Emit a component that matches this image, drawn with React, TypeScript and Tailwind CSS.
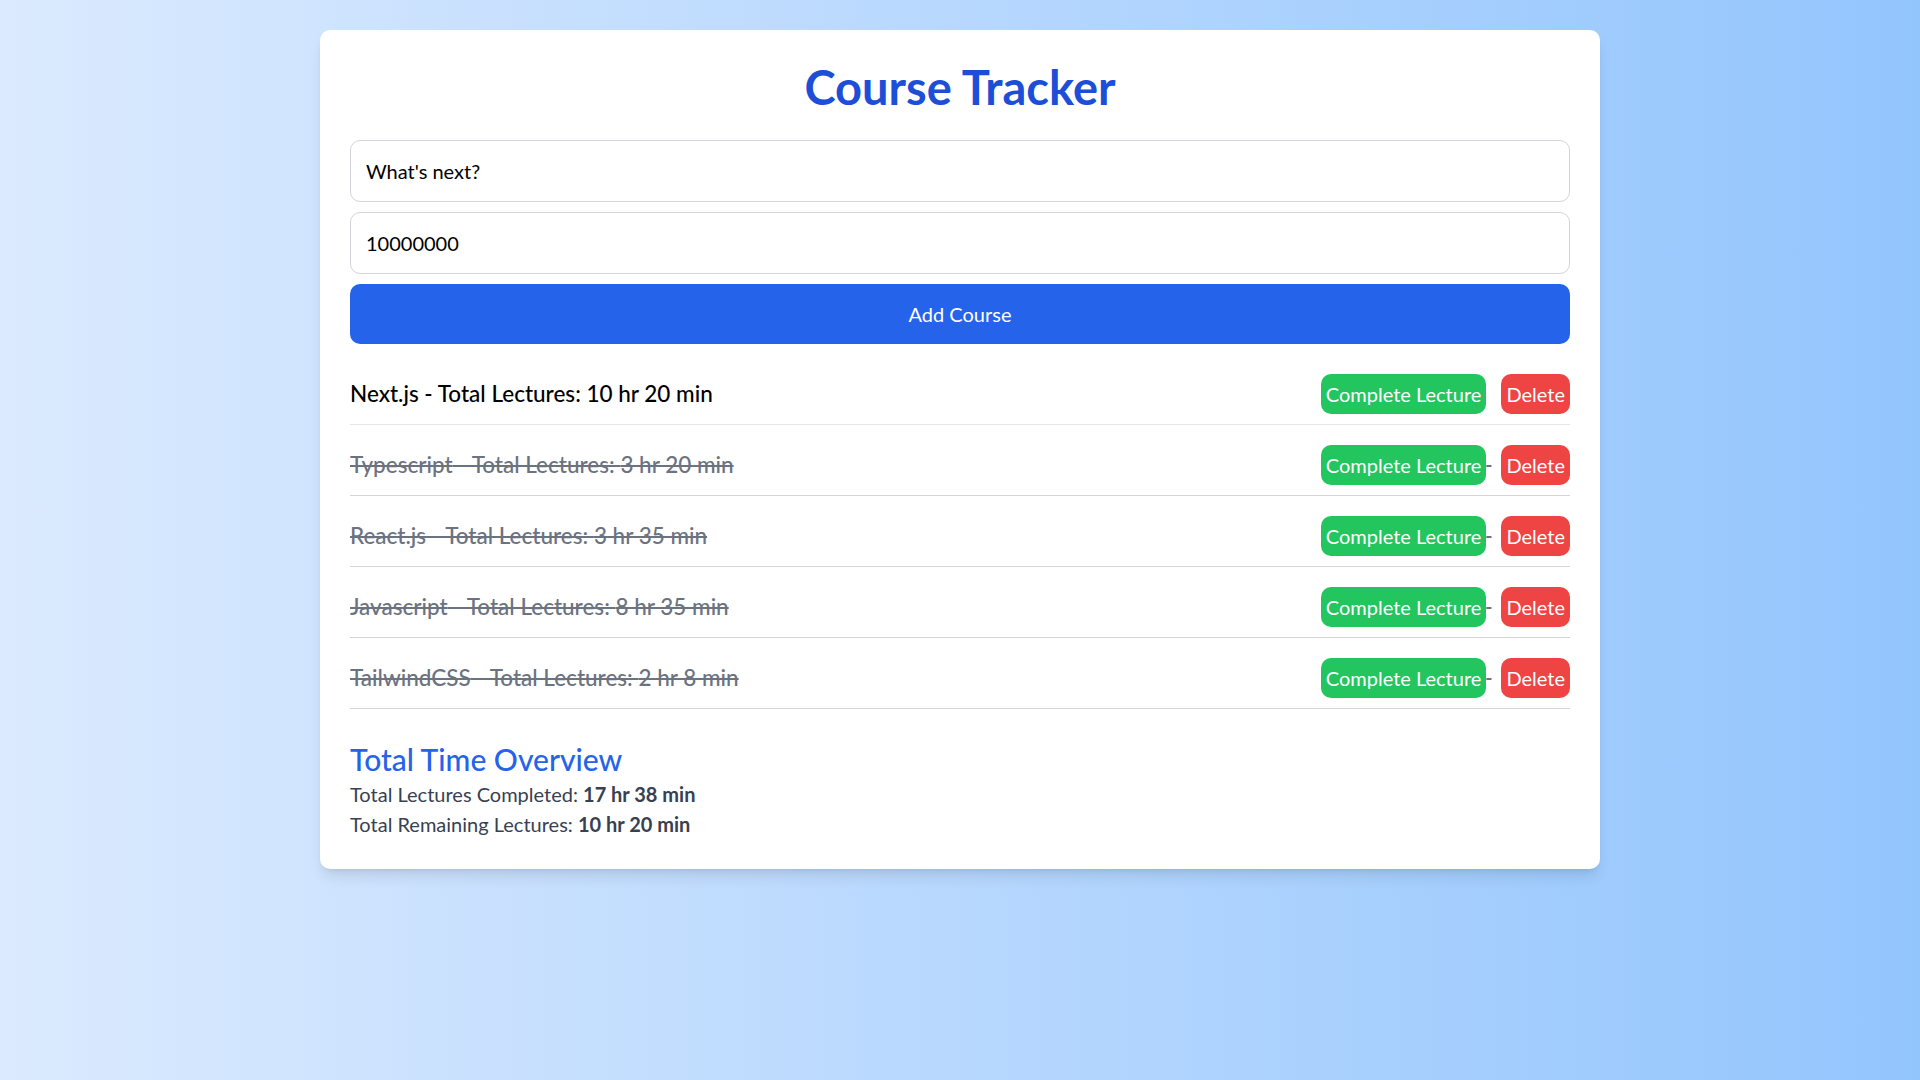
import React, { useState } from 'react';

interface Course {
  name: string;
  minutes: number;
  done: boolean;
}

const initialCourses: Course[] = [
  { name: 'Next.js', minutes: 620, done: false },
  { name: 'Typescript', minutes: 200, done: true },
  { name: 'React.js', minutes: 215, done: true },
  { name: 'Javascript', minutes: 515, done: true },
  { name: 'TailwindCSS', minutes: 128, done: true },
];

const fmt = (m: number) => `${Math.floor(m / 60)} hr ${m % 60} min`;

export default function App() {
  const [courses, setCourses] = useState<Course[]>(initialCourses);
  const [title, setTitle] = useState("What's next?");
  const [duration, setDuration] = useState('10000000');

  const completed = courses.filter((c) => c.done).reduce((s, c) => s + c.minutes, 0);
  const remaining = courses.filter((c) => !c.done).reduce((s, c) => s + c.minutes, 0);

  const toggle = (i: number) =>
    setCourses((list) => list.map((c, idx) => (idx === i ? { ...c, done: !c.done } : c)));
  const remove = (i: number) => setCourses((list) => list.filter((_, idx) => idx !== i));

  return (
    <div className="min-h-screen bg-gradient-to-r from-[#dbeafe] to-[#93c5fd] pt-[30px] font-['Lato','Open_Sans',sans-serif]">
      <div className="max-w-[1280px] mx-auto bg-white rounded-[10px] shadow-lg p-[30px]">
        <h1 className="text-[47px] leading-[50px] font-bold text-center text-[#1d4ed8] pt-[2px] mb-[28px]">
          Course Tracker
        </h1>

        <input
          className="w-full border border-[#d1d5db] rounded-[10px] p-[15px] text-[20px] leading-[30px] text-black mb-[10px] outline-none"
          value={title}
          onChange={(e) => setTitle(e.target.value)}
        />
        <input
          className="w-full border border-[#d1d5db] rounded-[10px] p-[15px] text-[20px] leading-[30px] text-black mb-[10px] outline-none"
          value={duration}
          onChange={(e) => setDuration(e.target.value)}
        />
        <button className="w-full bg-[#2563eb] text-white rounded-[10px] py-[15px] text-[20px] leading-[30px]">
          Add Course
        </button>

        <ul className="mt-[20px]">
          {courses.map((c, i) => (
            <li
              key={c.name}
              className={
                c.done
                  ? 'flex justify-between items-center py-[10px] mb-[10px] border-b border-[#d1d5db] line-through text-[#6b7280]'
                  : 'flex justify-between items-center py-[10px] mb-[10px] border-b border-[#e5e7eb] text-black'
              }
            >
              <span className="text-[22.5px] font-medium">
                {c.name} - Total Lectures: {fmt(c.minutes)}
              </span>
              <div className="text-[20px] leading-[30px]">
                <button
                  onClick={() => toggle(i)}
                  className="bg-[#22c55e] text-white px-[5px] py-[5px] rounded-[10px] text-[20px] leading-[30px]"
                >
                  Complete Lecture
                </button>{' '}
                <button
                  onClick={() => remove(i)}
                  className="ml-[10px] bg-[#ef4444] text-white px-[5px] py-[5px] rounded-[10px] text-[20px] leading-[30px]"
                >
                  Delete
                </button>
              </div>
            </li>
          ))}
        </ul>

        <div className="mt-[30px]">
          <h2 className="text-[30px] leading-[40px] font-medium text-[#2563eb]">Total Time Overview</h2>
          <p className="text-[20px] leading-[30px] text-[#374151]">
            Total Lectures Completed: <span className="font-bold">{fmt(completed)}</span>
          </p>
          <p className="text-[20px] leading-[30px] text-[#374151]">
            Total Remaining Lectures: <span className="font-bold">{fmt(remaining)}</span>
          </p>
        </div>
      </div>
    </div>
  );
}
